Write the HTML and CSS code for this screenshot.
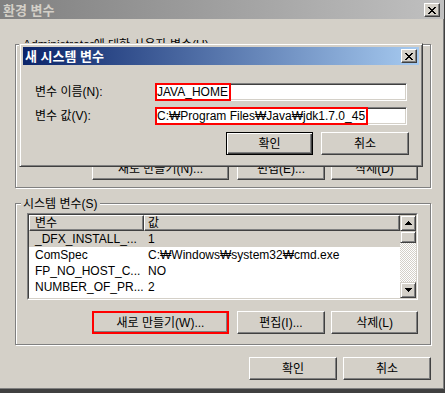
FILE: index.html
```html
<!DOCTYPE html>
<html lang="ko">
<head>
<meta charset="utf-8">
<title>환경 변수</title>
<link rel="stylesheet" href="styles.css">
</head>
<body>
<div class="window">
  <div class="titlebar">
    <span class="title inactive">환경 변수</span>
    <span class="xbtn"><svg width="8" height="7" viewBox="0 0 8 7" shape-rendering="crispEdges"><path d="M0 0h2v1H0zM6 0h2v1H6zM1 1h2v1H1zM5 1h2v1H5zM2 2h4v1H2zM3 3h2v1H3zM2 4h4v1H2zM1 5h2v1H1zM5 5h2v1H5zM0 6h2v1H0zM6 6h2v1H6z" fill="#000"/></svg></span>
  </div>
  <div class="content">
    <div class="group user">
      <div class="group-label">Administrator에 대한 사용자 변수(U)</div>
      <div class="listview user-list"><div class="lv-inner"></div></div>
      <div class="btnrow">
        <button class="btn w137">새로 만들기(N)...</button>
        <button class="btn w88">편집(E)...</button>
        <button class="btn w87">삭제(D)</button>
      </div>
    </div>
    <div class="group system">
      <div class="group-label">시스템 변수(S)</div>
      <div class="listview sys-list">
        <div class="lv-inner">
          <div class="lv-main">
            <div class="lv-header">
              <div class="hcell c1">변수</div>
              <div class="hcell c2">값</div>
            </div>
            <div class="row sel"><span class="r1">_DFX_INSTALL_...</span><span class="r2">1</span></div>
            <div class="row"><span class="r1">ComSpec</span><span class="r2">C:₩Windows₩system32₩cmd.exe</span></div>
            <div class="row"><span class="r1">FP_NO_HOST_C...</span><span class="r2">NO</span></div>
            <div class="row"><span class="r1">NUMBER_OF_PR...</span><span class="r2">2</span></div>
            <div class="row"><span class="r1">OS</span><span class="r2">Windows_NT</span></div>
          </div>
          <div class="vscroll">
            <div class="sb-btn"><svg width="7" height="4" viewBox="0 0 7 4" shape-rendering="crispEdges"><path d="M3 0h1v1H3zM2 1h3v1H2zM1 2h5v1H1zM0 3h7v1H0z" fill="#000"/></svg></div>
            <div class="sb-thumb"></div>
            <div class="sb-track"></div>
            <div class="sb-btn"><svg width="7" height="4" viewBox="0 0 7 4" shape-rendering="crispEdges"><path d="M0 0h7v1H0zM1 1h5v1H1zM2 2h3v1H2zM3 3h1v1H3z" fill="#000"/></svg></div>
          </div>
        </div>
      </div>
      <div class="btnrow sys-btns">
        <button class="btn w137 marked">새로 만들기(W)...</button>
        <button class="btn w88">편집(I)...</button>
        <button class="btn w87">삭제(L)</button>
      </div>
    </div>
    <div class="btnrow bottom">
      <button class="btn w88">확인</button>
      <button class="btn w88">취소</button>
    </div>
  </div>

  <div class="dialog">
    <div class="dtitle">
      <span class="title active">새 시스템 변수</span>
      <span class="xbtn"><svg width="8" height="7" viewBox="0 0 8 7" shape-rendering="crispEdges"><path d="M0 0h2v1H0zM6 0h2v1H6zM1 1h2v1H1zM5 1h2v1H5zM2 2h4v1H2zM3 3h2v1H3zM2 4h4v1H2zM1 5h2v1H1zM5 5h2v1H5zM0 6h2v1H0zM6 6h2v1H6z" fill="#000"/></svg></span>
    </div>
    <div class="dbody">
      <div class="form">
        <label class="flabel">변수 이름(N):</label>
        <div class="field"><span class="mark">JAVA_HOME</span></div>
        <label class="flabel">변수 값(V):</label>
        <div class="field"><span class="mark">C:₩Program Files₩Java₩jdk1.7.0_45</span></div>
      </div>
      <div class="dbtns">
        <button class="btn w87 default">확인</button>
        <button class="btn w88">취소</button>
      </div>
    </div>
  </div>
</div>
</body>
</html>
```

FILE: styles.css
```css
html, body {
  margin: 0;
  padding: 0;
  background: #d4d0c8;
}
body {
  font: 12px/14px "Liberation Sans", "DejaVu Sans", "Noto Sans CJK KR", sans-serif;
  color: #000;
}
.window {
  position: relative;
  width: 445px;
  height: 393px;
  box-sizing: border-box;
  background: #d4d0c8;
  border-right: 1px solid #404040;
  border-bottom: 4px solid #404040;
  box-shadow: inset -1px -1px #808080;
  overflow: hidden;
}
.titlebar {
  height: 19px;
  display: flex;
  justify-content: space-between;
  align-items: flex-start;
  padding: 0 4px 0 3px;
  background: linear-gradient(to right, #808080, #c0c0c0);
}
.title {
  font: bold 13px/19px "Noto Sans CJK KR", sans-serif;
  white-space: nowrap;
}
.title.inactive { color: #d4d0c8; }
.title.active { color: #fff; line-height: 18px; }
.xbtn {
  width: 16px;
  height: 14px;
  box-sizing: border-box;
  margin-top: 3px;
  display: flex;
  align-items: center;
  justify-content: center;
  background: #d4d0c8;
  border: 1px solid;
  border-color: #fff #404040 #404040 #fff;
  box-shadow: inset -1px -1px #808080;
}
.xbtn svg { display: block; }
.content {
  padding: 25px 0 0 15px;
}
.group {
  width: 416px;
  box-sizing: border-box;
  border: 1px solid #808080;
  box-shadow: inset 1px 1px #fff, 1px 1px #fff;
  display: flex;
  flex-direction: column;
  padding: 0 12px 7px 11px;
}
.group.system {
  margin-top: 15px;
  padding-bottom: 10px;
}
.group-label {
  align-self: flex-start;
  margin: -7px 0 0 -6px;
  padding: 0 2px;
  line-height: 14px;
  background: #d4d0c8;
  white-space: nowrap;
}
.listview {
  box-sizing: border-box;
  border: 1px solid;
  border-color: #808080 #fff #fff #808080;
}
.user-list { height: 97px; margin-top: 1px; }
.sys-list { height: 87px; margin-top: 2px; }
.lv-inner {
  height: 100%;
  box-sizing: border-box;
  border: 1px solid;
  border-color: #404040 #d4d0c8 #d4d0c8 #404040;
  background: #fff;
  display: flex;
  overflow: hidden;
}
.lv-main {
  flex: 1;
  min-width: 0;
}
.lv-header {
  display: flex;
  height: 16px;
}
.hcell {
  box-sizing: border-box;
  height: 16px;
  border: 1px solid;
  border-color: #fff #404040 #404040 #fff;
  box-shadow: inset -1px -1px #808080;
  background: #d4d0c8;
  line-height: 14px;
  white-space: nowrap;
}
.hcell.c1 { width: 115px; padding-left: 5px; }
.hcell.c2 { flex: 1; padding-left: 3px; }
.row {
  display: flex;
  height: 16px;
  line-height: 16px;
  white-space: nowrap;
}
.row.sel { background: #d4d0c8; }
.r1 { width: 115px; box-sizing: border-box; padding-left: 6px; }
.r2 { flex: 1; padding-left: 4px; }
.vscroll {
  width: 16px;
  display: flex;
  flex-direction: column;
}
.sb-btn, .sb-thumb {
  box-sizing: border-box;
  border: 1px solid;
  border-color: #d4d0c8 #404040 #404040 #d4d0c8;
  box-shadow: inset 1px 1px #fff, inset -1px -1px #808080;
  background: #d4d0c8;
}
.sb-btn {
  height: 16px;
  display: flex;
  align-items: center;
  justify-content: center;
}
.sb-btn svg { display: block; }
.sb-thumb { height: 12px; }
.sb-track {
  flex: 1;
  background-color: #fff;
  background-image: conic-gradient(#d4d0c8 25%, #fff 0 50%, #d4d0c8 0 75%, #fff 0);
  background-size: 2px 2px;
}
.btnrow {
  display: flex;
  justify-content: flex-end;
  gap: 6px;
  margin-top: 7px;
}
.btnrow .w137 { margin-right: 2px; }
.sys-btns { margin-top: 11px; }
.btnrow.bottom {
  width: 416px;
  margin-top: 12px;
}
.btn {
  height: 23px;
  box-sizing: border-box;
  padding: 0;
  margin: 0;
  font: inherit;
  line-height: 14px;
  color: #000;
  background: #d4d0c8;
  border: 1px solid;
  border-color: #fff #404040 #404040 #fff;
  box-shadow: inset -1px -1px #808080;
  white-space: nowrap;
}
.w137 { width: 137px; }
.w88 { width: 88px; }
.w87 { width: 87px; }
.btn.marked {
  border: 2px solid #f00;
  box-shadow: inset -1px -1px #808080;
}
.btn.default {
  border-color: #000;
  box-shadow: inset 1px 1px #fff, inset -1px -1px #404040, inset -2px -2px #808080;
}
.dialog {
  position: absolute;
  left: 19px;
  top: 43px;
  width: 404px;
  height: 124px;
  box-sizing: border-box;
  padding: 3px;
  background: #d4d0c8;
  border: 1px solid;
  border-color: #d4d0c8 #404040 #404040 #d4d0c8;
  box-shadow: inset 1px 1px #fff, inset -1px -1px #808080;
}
.dtitle {
  height: 18px;
  display: flex;
  justify-content: space-between;
  align-items: flex-start;
  padding: 0 2px;
  background: linear-gradient(to right, #0a246a, #a6caf0);
}
.dtitle .xbtn { margin-top: 2px; }
.dbody {
  padding: 18px 10px 0 12px;
}
.form {
  display: grid;
  grid-template-columns: 120px 252px;
  row-gap: 6px;
  align-items: center;
}
.flabel {
  line-height: 18px;
  white-space: nowrap;
}
.field {
  position: relative;
  height: 18px;
  box-sizing: border-box;
  background: #fff;
  border: 1px solid;
  border-color: #808080 #fff #fff #808080;
  box-shadow: inset 1px 1px #404040, inset -1px -1px #d4d0c8;
}
.mark {
  position: absolute;
  left: -1px;
  top: -1px;
  height: 18px;
  box-sizing: border-box;
  border: 2px solid #f00;
  padding: 0 1px 0 0;
  line-height: 14px;
  background: #fff;
  white-space: nowrap;
}
.dbtns {
  display: flex;
  justify-content: flex-end;
  gap: 8px;
  margin-top: 7px;
}
```
